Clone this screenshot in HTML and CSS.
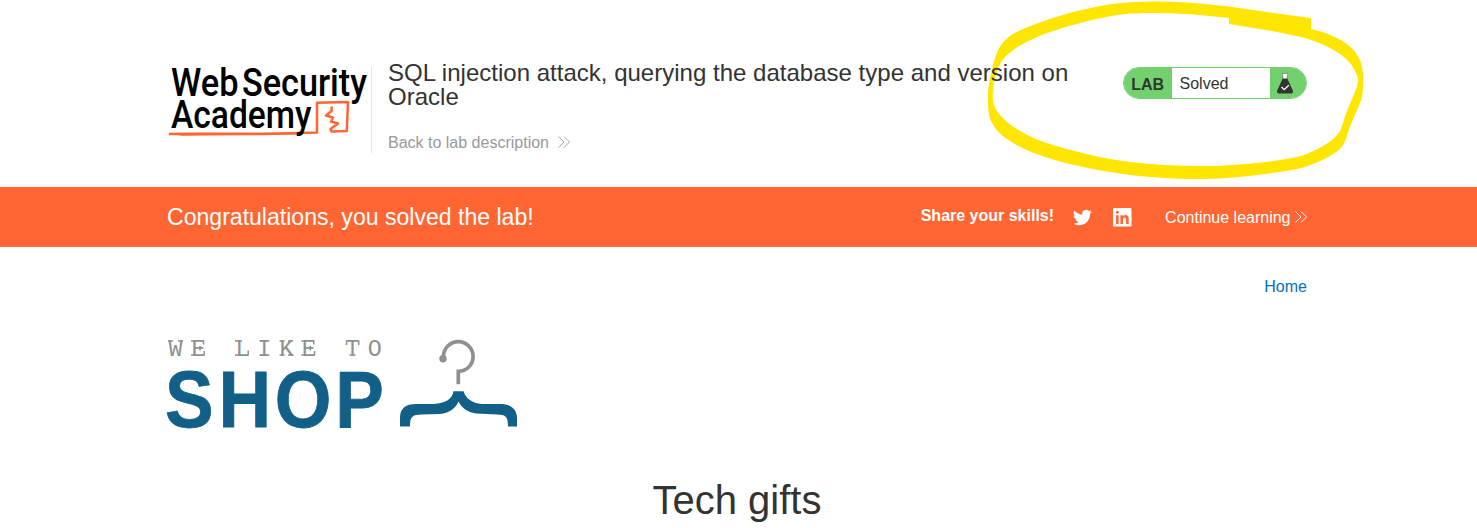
FILE: index.html
```html
<!DOCTYPE html>
<html lang="en">
<head>
<meta charset="utf-8">
<title>SQL injection attack, querying the database type and version on Oracle</title>
<link rel="stylesheet" href="styles.css">
</head>
<body>
<svg class="marker" viewBox="0 0 1477 187" aria-hidden="true">
  <path fill-rule="evenodd" d="M1157 1.500C1140 1.500 1122 2.500 1107 4.700C1085 8.500 1064 14 1047 20C1033 25 1022 28.500 1012 34.500C1004 40 999.500 46 996.500 54C993.500 61 992.500 66 991.500 72C989 82 988 88 988 98C988 108 988.500 116 991.500 122C996 131 1003 136.500 1010 141C1018 146.500 1030 152 1042 156C1058 161.500 1073 165 1090 168.500C1118 174 1150 178 1180 178.700C1210 180 1230 178 1253 175.500C1272 173 1290 171 1303 167.500C1318 163 1330 157 1340 149C1348 140 1347 131 1352 122C1356 111 1361 104 1362.600 93C1363.200 84 1363.500 73 1361.800 66C1360 58 1355 51 1350 46.500C1340 38 1325 32 1311 29V18L1270 12.500C1235 7 1195 1.500 1157 1.500ZM1140 13.200C1128 13.500 1120 14.400 1112 16C1090 20 1067 26 1047 33C1033 38.500 1021 44 1012 51C1005 56 1000 62 997.500 70C994.500 78 992.500 88 992.700 97C993 104 995 109 1000 115C1006 122 1014 128 1023 132.500C1036 140 1049 144 1063 148C1085 154 1107 159 1130 162C1160 165.500 1190 166.700 1220 165.700C1240 164.500 1261 163 1280 160C1290 158.500 1299 157 1307 154C1318 149 1330 143 1337 135C1343 128 1342 124 1345 117C1349 104 1356 93 1358.300 81C1357.500 74 1354 68 1350 63C1345 57 1338 52 1330 48C1322 44 1313 40 1303 37.500C1279 31.500 1253 28 1229 24V18C1200 14.500 1169 12.500 1140 13.200Z"/>
</svg>

<header class="lab-header container">
  <svg class="academy-logo" viewBox="0 0 201 76" role="img" aria-label="Web Security Academy">
    <path class="logo-line" d="M2 67L34 66.800L97 67L150 65.500L150 35.800L181 35L179.800 64L164.500 64.500L163.500 62L171 56.500L164 54.500L166 50.500L159 48.500L164.500 44L164.700 39.500"/>
    <path class="logo-taper" d="M0 66L132 65.500V67.500L15 68.700Z"/>
    <g class="logo-words">
      <text x="4" y="28.500" textLength="67.500" lengthAdjust="spacingAndGlyphs">Web</text>
      <text x="75" y="28.500" textLength="125" lengthAdjust="spacingAndGlyphs">Security</text>
      <text x="4" y="61" textLength="140.500" lengthAdjust="spacingAndGlyphs">Academy</text>
    </g>
  </svg>
  <div class="title-container">
    <h2>SQL injection attack, querying the database type and version on Oracle</h2>
    <a class="back-link" href="#">Back to lab description
      <svg class="chevrons" viewBox="0 0 12 12"><path d="M.5.500L6 6L.5 11.500M6 .5L11.500 6L6 11.500"/></svg>
    </a>
  </div>
  <div class="lab-status">
    <span class="status-label">LAB</span>
    <span class="status-text">Solved</span>
    <span class="status-icon">
      <svg class="flask" viewBox="0 0 16 21">
        <path class="flask-glass" d="M5 .5H11V2L10 3V6H6V3L5 2Z"/>
        <path class="flask-rim" d="M5 .5H11L10.200 2V6M5 .5L5.800 2V6"/>
        <path class="flask-body" d="M5.700 5.500H10.300L15.800 17.500Q16.500 20.500 14 20.500H2Q-.5 20.500.2 17.500Z"/>
        <path class="flask-check" d="M4.500 14L7.200 16.700L11.800 12.200"/>
      </svg>
    </span>
  </div>
</header>

<section class="solved-banner">
  <div class="banner-row container">
    <p class="congrats">Congratulations, you solved the lab!</p>
    <span class="share">Share your skills!</span>
    <svg class="twitter" viewBox="0 0 24 24"><path d="M23.950 4.600a10 10 0 0 1-2.800.8 4.900 4.900 0 0 0 2.100-2.700 10 10 0 0 1-3.100 1.200 4.900 4.900 0 0 0-8.400 4.500C7.700 8.200 4.100 6.300 1.700 3.300a4.900 4.900 0 0 0 1.500 6.600 4.900 4.900 0 0 1-2.200-.6v.1a4.900 4.900 0 0 0 3.900 4.800 5 5 0 0 1-2.200.1 4.900 4.900 0 0 0 4.600 3.400A9.900 9.900 0 0 1 0 19.700a14 14 0 0 0 7.500 2.200c9.100 0 14-7.500 14-14v-.6a10 10 0 0 0 2.500-2.700z"/></svg>
    <svg class="linkedin" viewBox="0 0 18 18"><path fill-rule="evenodd" d="M1 0H17Q18 0 18 1V17Q18 18 17 18H1Q0 18 0 17V1Q0 0 1 0ZM3 7V15.500H5.500V7ZM4.250 2.700A1.500 1.500 0 1 0 4.250 5.700A1.500 1.500 0 1 0 4.250 2.700ZM7.200 7V15.500H9.700V11C9.700 8.500 12.700 8.500 12.700 11V15.500H15.300V10.500C15.300 6.500 11.300 5.900 9.700 8.100V7Z"/></svg>
    <a class="continue" href="#">Continue learning
      <svg class="chevrons" viewBox="0 0 12 12"><path d="M.5.500L6 6L.5 11.500M6 .5L11.500 6L6 11.500"/></svg>
    </a>
  </div>
</section>

<main class="container">
  <nav class="top-links"><a href="#">Home</a></nav>
  <svg class="shop-logo" viewBox="0 0 352 92" role="img" aria-label="We like to shop">
    <text class="tagline" x="1.500 24.500 68.500 90.300 112.500 134.800 178.500 200.700" y="16.700">WELIKETO</text>
    <path class="slabs" d="M1 2h5M11 2h5M24 2h4M24 16h4M33 7v4.500M36.500 1.500v4M37.200 16.500v-4.500M68 2h7M68 16h4M81.200 16.500v-5M112.500 2h5M121 2h5M112.500 16h5M121 16h5.500M134.300 2h4M134.300 16h4M143.300 7v4.500M146.800 1.500v4M147.500 16.500v-4.500M182.500 16h6M179.500 1.500v4.500M191.700 1.500v4.500"/>
    <text class="shop-word" x="-2.200 56.500 118.300 184.900" y="87.600" transform="scale(.91 1)">SHOP</text>
    <circle class="hook-tip" cx="276" cy="19.700" r="3.700"/>
    <path class="hook" d="M276.500 19V17.500A14.800 14.800 0 1 1 291.300 32.300V45.300"/>
    <path class="hanger" d="M286.500 52.300H296.500C299 60 305 64 315 65H333C344 65 350 70 350 79V87.500H341C341 78 339 75.500 330 75.500L309 74.500C300 73 295 69 291.500 62.500C288 70 282 74 273 75L255 75.500C245 75.500 243 78 243 87.500H233V79C233 69 239 65 249 65H267C278 64 285 61 286.500 52.300Z"/>
  </svg>
  <h1>Tech gifts</h1>
</main>
</body>
</html>
```
FILE: styles.css
```css
* { box-sizing: border-box; }
body {
  margin: 0;
  height: 528px;
  overflow: hidden;
  background: #fff;
  color: #333332;
  font: 16px/20px "Liberation Sans", Arial, sans-serif;
}
a { text-decoration: none; }
svg { display: block; overflow: visible; flex: none; }
h1, h2, p { margin: 0; font-weight: 400; }
.container { width: 1140px; margin-left: 167px; }

/* Highlighter stroke sits underneath the header copy. */
.marker {
  position: absolute;
  top: 0;
  left: 0;
  z-index: -1;
  width: 1477px;
  height: 187px;
  fill: #ffe600;
}

.lab-header { display: flex; height: 187px; padding-top: 67px; }
.academy-logo { width: 201px; height: 76px; }
.logo-words { font: 500 38px Roboto, sans-serif; fill: #000; }
.logo-line { fill: none; stroke: #ff6633; stroke-width: 2.500; stroke-linejoin: round; }
.logo-taper { fill: #ff6633; }
.title-container {
  width: 735px;
  height: 86px;
  margin-left: 3px;
  padding-left: 16px;
  border-left: 1px solid #e5e5e5;
}
.title-container h2 {
  width: 700px;
  margin-top: -6px;
  font-size: 24px;
  line-height: 24px;
  letter-spacing: .012px;
}
.back-link {
  display: flex;
  align-items: center;
  gap: 8.700px;
  margin-top: 24px;
  line-height: 20px;
  color: #999;
}
.chevrons { width: 12px; height: 12px; margin-top: -2px; fill: none; stroke: currentColor; stroke-width: .9; }

.lab-status {
  display: flex;
  width: 184px;
  height: 32px;
  margin-left: auto;
  overflow: hidden;
  border: 1px solid #72d16e;
  border-radius: 16px;
  line-height: 32px;
}
.status-label { width: 48px; padding-left: 7.200px; background: #72d16e; font-weight: 700; line-height: 33px; }
.status-text { flex: 1; padding-left: 7.500px; background: #fff; }
.status-icon { width: 36px; padding: 5px 0 0 7px; background: #72d16e; }
.flask { width: 16px; height: 21px; }
.flask-glass { fill: #fff; }
.flask-rim { fill: none; stroke: #777; stroke-width: .7; }
.flask-body { fill: #333332; }
.flask-check { fill: none; stroke: #fff; stroke-width: 1.300; }

.solved-banner { height: 60px; background: #ff6633; color: #fff; }
.banner-row { display: flex; align-items: center; height: 60px; }
.congrats { flex: 1; font-size: 23.070px; }
.share { margin: -2px 19px 0 0; font-weight: 700; }
.twitter { width: 19px; height: 19px; margin-right: 20.500px; fill: #fff; }
.linkedin { width: 18.500px; height: 18.500px; margin: 0 34px 0 0; fill: #fff; }
.continue { display: flex; align-items: center; gap: 4.500px; padding-top: 2px; color: #fff; }

.top-links { display: flex; justify-content: flex-end; padding-top: 30px; }
.top-links a { color: #0071bc; }
.shop-logo { width: 352px; height: 92px; margin-top: 42px; }
.tagline { font: 23.400px "Liberation Mono", monospace; fill: #909090; }
.slabs { fill: none; stroke: #909090; stroke-width: 1.500; }
.shop-word { font: 700 80px "Liberation Sans", Arial, sans-serif; fill: #126087; stroke: #126087; stroke-width: .8; }
.hook { fill: none; stroke: #909090; stroke-width: 3.700; }
.hook-tip { fill: #909090; }
.hanger { fill: #126087; }
h1 { margin-top: 45px; font-size: 40px; line-height: 48px; text-align: center; }
```
